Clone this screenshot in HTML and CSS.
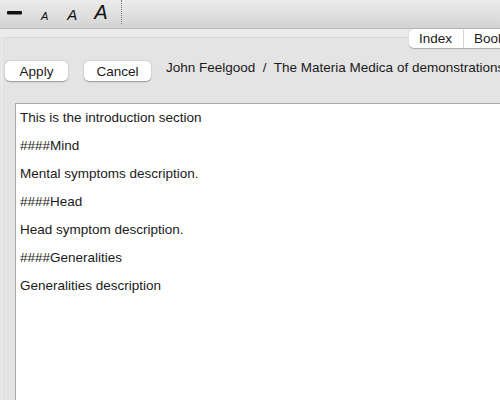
FILE: index.html
```html
<!DOCTYPE html>
<html>
<head>
<meta charset="utf-8">
<link rel="stylesheet" href="styles.css">
</head>
<body>
<div class="window">
  <div class="toolbar">
    <span class="tool minus"><svg width="16" height="6" viewBox="0 0 16 6"><rect x="0" y="1" width="15" height="3.4" rx="1" fill="#111"/></svg></span>
    <span class="tool a-small">A</span>
    <span class="tool a-med">A</span>
    <span class="tool a-large">A</span>
    <span class="sep"></span>
  </div>
  <div class="band"></div>
  <div class="panel">
    <div class="tabs">
      <span class="tab first">Index</span>
      <span class="tab last">Book</span>
    </div>
    <div class="actions">
      <button class="btn apply">Apply</button>
      <button class="btn cancel">Cancel</button>
      <span class="crumb">John Feelgood &nbsp;/&nbsp; The Materia Medica of demonstrations</span>
    </div>
    <div class="editor">
      <div class="line">This is the introduction section</div>
      <div class="line">####Mind</div>
      <div class="line">Mental symptoms description.</div>
      <div class="line">####Head</div>
      <div class="line">Head symptom description.</div>
      <div class="line">####Generalities</div>
      <div class="line">Generalities description</div>
    </div>
  </div>
</div>
</body>
</html>
```
FILE: styles.css
```css
html, body {
  margin: 0;
  padding: 0;
  width: 500px;
  height: 400px;
  overflow: hidden;
  background: #e4e4e4;
  font-family: "Liberation Sans", Arial, sans-serif;
  color: #1a1a1a;
}
.window {
  width: 500px;
  height: 400px;
  display: flex;
  flex-direction: column;
  overflow: hidden;
}
.toolbar {
  flex: none;
  background: linear-gradient(#ececec, #d3d3d3);
  border-bottom: 1px solid #b9b9b9;
  display: flex;
  align-items: center;
  box-sizing: border-box;
  height: 29px;
}
.tool {
  font-style: italic;
  color: #111;
  display: inline-flex;
  align-items: center;
  justify-content: center;
}
.minus {
  width: 16px;
  margin-left: 7px;
  margin-top: -2px;
}
.a-small {
  font-size: 11px;
  margin-left: 18px;
  margin-top: 3px;
}
.a-med {
  font-size: 15px;
  margin-left: 19px;
  margin-top: 1px;
}
.a-large {
  font-size: 20px;
  margin-left: 17px;
  margin-top: -4px;
}
.sep {
  width: 0;
  height: 24px;
  border-left: 1px dotted #777;
  margin-left: 13px;
  margin-top: -4px;
}
.band {
  height: 8px;
  flex: none;
  background: #ebebeb;
}
.panel {
  flex: 1;
  position: relative;
  margin-left: 1px;
  background: #e4e4e4;
  border-top: 1px solid #d6d6d6;
  border-left: 1px solid #efefef;
  border-top-left-radius: 6px;
  display: flex;
  flex-direction: column;
  min-height: 0;
}
.tabs {
  position: absolute;
  top: -9px;
  left: 407px;
  display: flex;
  height: 19px;
  background: #fff;
  border-radius: 5px 0 0 5px;
  box-shadow: 0 0.5px 1px rgba(0,0,0,0.25);
  font-size: 13.5px;
  white-space: nowrap;
}
.tab {
  line-height: 19px;
  padding: 0 11px 0 10px;
}
.tab.first {
  border-right: 1px solid #d8d8d8;
}
.actions {
  display: flex;
  align-items: flex-start;
  padding: 23px 0 0 3px;
  height: 65px;
  box-sizing: border-box;
  flex: none;
  white-space: nowrap;
}
.btn {
  flex: none;
  font-family: "Liberation Sans", Arial, sans-serif;
  font-size: 13.5px;
  color: #1a1a1a;
  background: #fff;
  border: none;
  border-radius: 5px;
  box-shadow: 0 0.5px 1.5px rgba(0,0,0,0.35);
  height: 20px;
  padding: 0;
}
.apply { width: 63px; }
.cancel { width: 67px; margin-left: 16px; }
.crumb {
  flex: none;
  font-size: 13.5px;
  margin-left: 15px;
  margin-top: -1px;
  line-height: 16px;
}
.editor {
  flex: 1;
  margin-left: 13px;
  background: #fff;
  border-top: 1px solid #a8a8a8;
  border-left: 1px solid #a8a8a8;
  padding: 0 0 0 4px;
  font-size: 13.5px;
}
.line {
  line-height: 28px;
}
```
